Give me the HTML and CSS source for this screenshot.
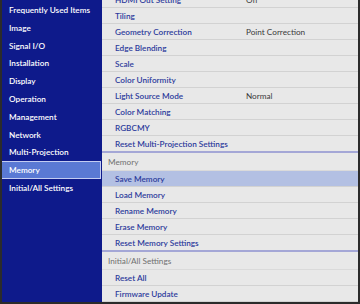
FILE: index.html
```html
<!DOCTYPE html>
<html lang="en">
<head>
    <meta charset="UTF-8">
    <title>Memory</title>
    <link rel="stylesheet" href="styles.css">
</head>
<body>
    <div id="screen">
        <div id="nav">
            <div class="nav-item">Frequently Used Items</div>
            <div class="nav-item">Image</div>
            <div class="nav-item">Signal I/O</div>
            <div class="nav-item">Installation</div>
            <div class="nav-item">Display</div>
            <div class="nav-item">Operation</div>
            <div class="nav-item">Management</div>
            <div class="nav-item">Network</div>
            <div class="nav-item">Multi-Projection</div>
            <div class="nav-item active">Memory</div>
            <div class="nav-item">Initial/All Settings</div>
        </div>

        <div id="list">
            <div class="row first"><span class="label">HDMI Out Setting</span><span class="value">Off</span></div>
            <div class="row"><span class="label">Tiling</span></div>
            <div class="row"><span class="label">Geometry Correction</span><span class="value">Point Correction</span></div>
            <div class="row"><span class="label">Edge Blending</span></div>
            <div class="row"><span class="label">Scale</span></div>
            <div class="row"><span class="label">Color Uniformity</span></div>
            <div class="row"><span class="label">Light Source Mode</span><span class="value">Normal</span></div>
            <div class="row"><span class="label">Color Matching</span></div>
            <div class="row"><span class="label">RGBCMY</span></div>
            <div class="row last"><span class="label">Reset Multi-Projection Settings</span></div>

            <div class="group">Memory</div>
            <div class="row selected"><span class="label">Save Memory</span></div>
            <div class="row"><span class="label">Load Memory</span></div>
            <div class="row"><span class="label">Rename Memory</span></div>
            <div class="row"><span class="label">Erase Memory</span></div>
            <div class="row last"><span class="label">Reset Memory Settings</span></div>

            <div class="group">Initial/All Settings</div>
            <div class="row"><span class="label">Reset All</span></div>
            <div class="row"><span class="label">Firmware Update</span></div>
        </div>
    </div>
</body>
</html>
```

FILE: styles.css
```css
body {
    margin: 0;
    padding: 0;
    background-color: #2b2b2b;
    font-family: Lato, "Open Sans", sans-serif;
    font-size: 8.2px;
}
#screen {
    display: flex;
    width: 356px;
    height: 302px;
    margin-left: 2px;
    overflow: hidden;
}
#nav {
    width: 100px;
    flex-shrink: 0;
    background-color: #0e1a8b;
    padding-top: 1px;
    box-sizing: border-box;
}
.nav-item {
    height: 17.8px;
    line-height: 18.4px;
    padding-left: 7px;
    color: #fff;
    font-weight: 600;
    white-space: nowrap;
    box-sizing: border-box;
}
.nav-item.active {
    background-color: #5a79d4;
    border: 1px solid #c3ccf2;
    margin-left: -1px;
    margin-right: 1px;
    padding-left: 7px;
    line-height: 16.4px;
}
#list {
    flex: 1;
    background-color: #e8e8e8;
}
.row {
    display: flex;
    height: 15px;
    line-height: 16px;
    border-bottom: 1px solid #d2d2d2;
    padding-left: 13px;
}
.row.first {
    margin-top: -8px;
}
.row.last {
    border-bottom: none;
}
.row.selected {
    background-color: #b3c0e3;
}
.label {
    width: 131px;
    color: #2d3b9c;
    font-weight: 600;
    white-space: nowrap;
}
.value {
    color: #3a3a3a;
}
.group {
    height: 17px;
    line-height: 18px;
    border-top: 2px solid #a4a7d6;
    border-bottom: 1px solid #dadada;
    padding-left: 6px;
    color: #707070;
}
```
